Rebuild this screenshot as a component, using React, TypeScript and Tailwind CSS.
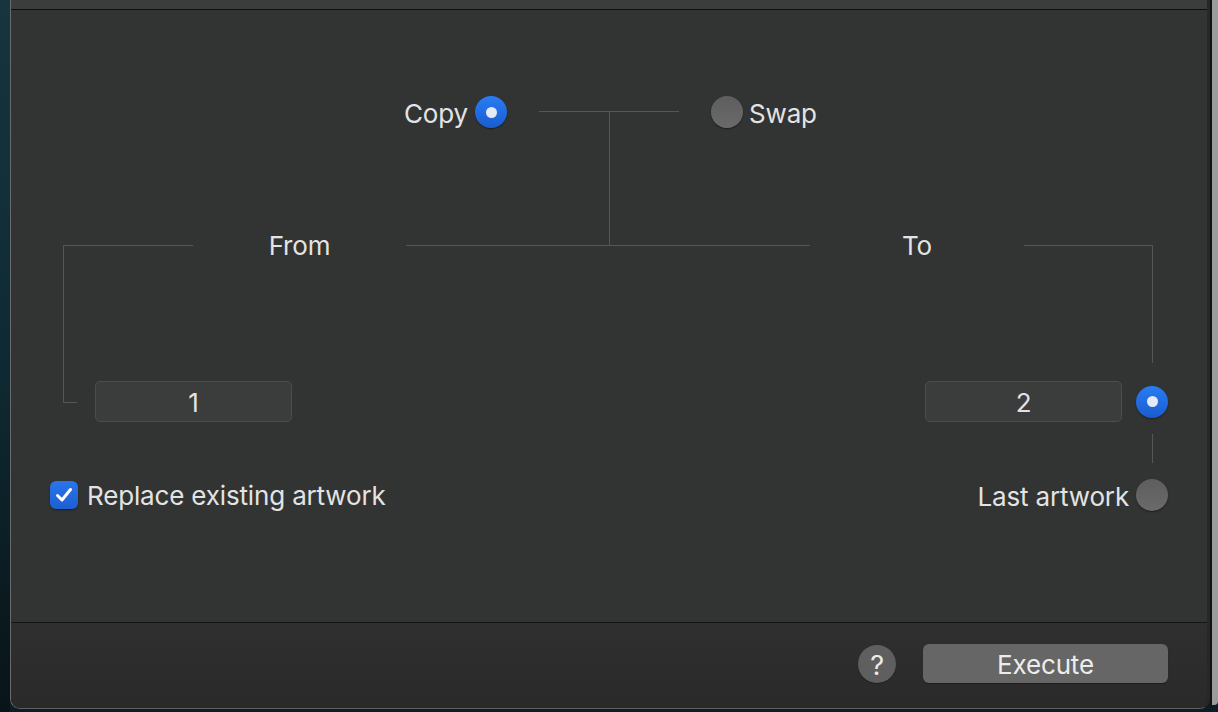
import React from "react";

function Radio({ on }: { on: boolean }) {
  return on ? (
    <div className="w-8 h-8 shrink-0 rounded-full bg-linear-to-b from-[#2a7cf3] to-[#1a5cd0] flex items-center justify-center shadow-[0_1px_1.5px_rgba(0,0,0,0.45)]">
      <div className="w-[11px] h-[11px] rounded-full bg-[#e2ebfa]" />
    </div>
  ) : (
    <div className="w-8 h-8 shrink-0 rounded-full bg-linear-to-b from-[#5e5e5e] to-[#6a6a6a] shadow-[0_1px_1.5px_rgba(0,0,0,0.45)]" />
  );
}

function Field({ value }: { value: string }) {
  return (
    <div className="w-[197px] h-[41px] shrink-0 rounded-[5px] bg-[#3b3c3c] border border-[#4c4d4d] flex items-center justify-center text-[26px] text-[#e2e2e2] leading-none">
      <span className="pt-[2px]">{value}</span>
    </div>
  );
}

export default function App() {
  return (
    <div className="w-[1218px] h-[712px] flex bg-[#0c1d24] font-['Inter',sans-serif] tracking-[-0.01em] overflow-hidden">
      {/* desktop strip left */}
      <div className="w-[10px] h-full bg-linear-to-b from-[#17343f] via-[#0f2a33] to-[#081418]" />
      {/* window */}
      <div className="w-[1200px] h-[709px] flex flex-col border-l border-[#6a6a6a] border-r-[3px] border-r-[#262727] border-b border-b-[#5f5f5f] rounded-b-[10px] overflow-hidden">
        <div className="h-[9px] bg-[#3b3c3c] shrink-0" />
        <div className="h-px bg-[#0e0e0e] shrink-0" />
        {/* main panel */}
        <div className="h-[612px] shrink-0 bg-[#323333] px-[39px] pt-[86px] flex flex-col text-[#e3e3e3] text-[26px]">
          {/* Row A */}
          <div className="grid grid-cols-[1fr_140px_1fr] items-start">
            <div className="h-8 flex items-center justify-end gap-[7px] mr-[32px]">
              <span className="leading-none pt-[3px]">Copy</span>
              <Radio on />
            </div>
            <div className="pt-[15px] flex flex-col">
              <div className="h-px bg-[#555656]" />
              <div className="w-px h-[133px] bg-[#555656] mx-auto" />
            </div>
            <div className="h-8 flex items-center justify-start gap-[6px] ml-[32px]">
              <Radio on={false} />
              <span className="leading-none pt-[3px]">Swap</span>
            </div>
          </div>
          {/* Row B */}
          <div className="h-px flex items-center">
            <div className="w-[13px]" />
            <div className="w-[130px] h-px bg-[#555656]" />
            <div className="w-[213px] text-center leading-none">From</div>
            <div className="flex-1 h-px bg-[#555656]" />
            <div className="w-[214px] text-center leading-none">To</div>
            <div className="w-[129px] h-px bg-[#555656]" />
            <div className="w-[15px]" />
          </div>
          {/* Row C */}
          <div className="flex justify-between">
            <div className="flex flex-col">
              <div className="flex items-end">
                <div className="ml-[13px] w-[14px] h-[158px] border-l border-b border-[#555656] mb-[19px] -mt-px" />
                <div className="ml-[18px]">
                  <Field value="1" />
                </div>
              </div>
              <div className="mt-[57px] h-8 flex items-center gap-[9px]">
                <div className="w-[28px] h-[28px] rounded-[6px] bg-linear-to-b from-[#2a74ec] to-[#1d5fd2] flex items-center justify-center shadow-[0_1px_1.5px_rgba(0,0,0,0.45)]">
                  <svg width="22" height="22" viewBox="0 0 22 22" fill="none">
                    <path d="M4.5 11.5 L9 16 L17.5 5.5" stroke="#ffffff" strokeWidth="3" strokeLinecap="round" strokeLinejoin="round" />
                  </svg>
                </div>
                <span className="leading-none pt-[2px]">Replace existing artwork</span>
              </div>
            </div>
            <div className="flex flex-col items-end">
              <div className="w-px h-[117px] bg-[#555656] mr-[15px]" />
              <div className="mt-[18px] flex items-center gap-[14px]">
                <Field value="2" />
                <Radio on />
              </div>
              <div className="w-px h-[29px] bg-[#555656] mr-[15px] mt-[12px]" />
              <div className="mt-[16px] h-8 flex items-center gap-[7px]">
                <span className="leading-none pt-[3px]">Last artwork</span>
                <Radio on={false} />
              </div>
            </div>
          </div>
        </div>
        <div className="h-px bg-[#151515] shrink-0" />
        {/* footer */}
        <div className="flex-1 bg-linear-to-b from-[#2f2f2f] to-[#2a2a2a] flex items-start justify-end pr-[39px] pt-[21px] gap-[27px]">
          <div className="mt-[1px] w-[38px] h-[38px] rounded-full bg-[#5f5f5f] flex items-center justify-center text-[27px] text-[#ebebeb] leading-none shadow-[0_1px_1px_rgba(0,0,0,0.3)]">
            <span className="pt-[2px]">?</span>
          </div>
          <div className="w-[245px] h-[39px] rounded-[6px] bg-[#666666] flex items-center justify-center text-[26px] text-[#ececec] leading-none shadow-[0_1px_1px_rgba(0,0,0,0.3)]">
            <span className="pt-[2px]">Execute</span>
          </div>
        </div>
      </div>
      {/* right strip */}
      <div className="w-[2px] h-[706px] bg-[#121212]" />
      <div className="w-[6px] h-[705px] bg-[#9b9b9b] rounded-br-[4px]" />
    </div>
  );
}
